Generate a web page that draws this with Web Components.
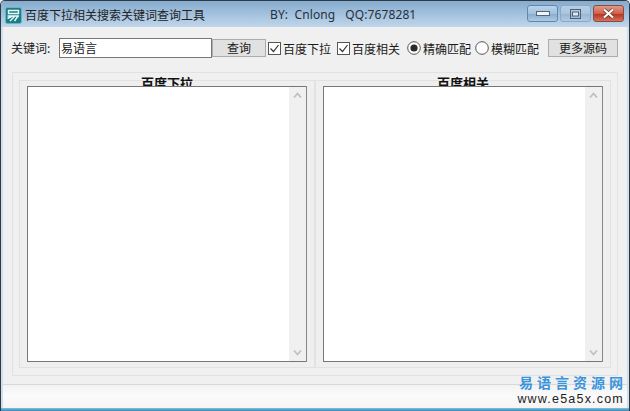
<!DOCTYPE html>
<html lang="zh"><head><meta charset="utf-8"><title>百度下拉相关搜索关键词查询工具</title>
<style>html,body{margin:0;padding:0;background:#f0f0f0}body{font:12px "Noto Sans CJK SC","Liberation Sans",sans-serif;color:#1a1a1a}</style>
</head><body>
<app-window></app-window>
<template id="tb"><style>
:host{display:flex;align-items:center;height:26px;box-sizing:border-box;padding-left:4px;background:linear-gradient(#86abcd 0,#a0bfdc 45%,#c0d6ea 100%);color:#222}
svg.logo{width:17px;height:17px;margin-top:3px;flex:none}
.t{margin-left:3px;width:245px;white-space:nowrap;margin-top:2px;font-size:12px;line-height:20px}
.by{white-space:nowrap;margin-top:2px;line-height:20px;font-family:"Noto Sans","Noto Sans CJK SC",sans-serif;font-size:12px;color:#26303a;letter-spacing:.1px}
.by span{margin-left:10px}
.ctl{margin-left:auto;display:flex;align-self:flex-start;margin-right:5px;margin-top:4px;gap:2px}
.b{width:31px;height:17px;box-sizing:border-box;border:1px solid #5f88ad;border-radius:3px;display:flex;align-items:center;justify-content:center}
.min{background:linear-gradient(#bad3e9,#a2c1dd 50%,#8aacce 55%,#aecbe5)}
.max{background:linear-gradient(#b8cfe4,#aac5de 50%,#9ab7d3 55%,#afc9e1);border-color:#8ba8c4}
.cls{background:linear-gradient(#e09a88,#d0604b 50%,#b93520 55%,#d3745f);border-color:#8a4a40}
</style>
<svg class="logo" viewBox="0 0 17 17"><rect x=".5" y=".5" width="16" height="16" rx="2" fill="#1b7d87" stroke="#62bac0"/><path d="M3.5 3.5h10v3h-10zM2.5 9h11.5M2.5 11.5L7.5 9M5 14l5-5M9.5 14l3.5-5" fill="none" stroke="#eafafa" stroke-width="1.4"/></svg>
<div class="t"><slot></slot></div>
<div class="by">BY:&nbsp; Cnlong<span>QQ:7678281</span></div>
<div class="ctl">
<div class="b min"><svg width="14" height="5"><rect x=".5" y=".5" width="13" height="4" fill="#eef4fa" stroke="#50667c"/></svg></div>
<div class="b max"><svg width="11" height="10"><rect x=".5" y=".5" width="10" height="9" fill="none" stroke="#4c6074"/><rect x="2.5" y="3" width="6" height="4" fill="#dfe9f2" stroke="#4c6074"/></svg></div>
<div class="b cls"><svg width="13" height="11"><path d="M2 1.5l9 8M11 1.5l-9 8" stroke="#5d342c" stroke-width="3.6"/><path d="M2 1.5l9 8M11 1.5l-9 8" stroke="#fff" stroke-width="2.2"/></svg></div>
</div></template>

<template id="btn"><style>
:host{display:flex;align-items:center;justify-content:center;box-sizing:border-box;height:18px;background:#e1e1e1;border:1px solid #adadad;line-height:16px;font-size:12px}
</style><slot></slot></template>

<template id="chk"><style>
:host{display:flex;align-items:center;white-space:nowrap;font-size:12px;height:18px}
.box{width:13px;height:13px;flex:none;margin-right:2px}
</style>
<svg class="box" viewBox="0 0 13 13"><rect x=".5" y=".5" width="12" height="12" fill="#fff" stroke="#555"/><path d="M2.5 6.5l3 3 5-6.5" fill="none" stroke="#333" stroke-width="1.2"/></svg><slot></slot></template>

<template id="rad"><style>
:host{display:flex;align-items:center;white-space:nowrap;font-size:12px;height:18px}
.box{width:14px;height:14px;flex:none;margin-right:2px}
</style>
<svg class="box" viewBox="0 0 14 14"><circle cx="7" cy="7" r="6.3" fill="#fff" stroke="#555"/><circle class="d" cx="7" cy="7" r="3.6" fill="#2a2a2a"/></svg><slot></slot></template>

<template id="list"><style>
:host{display:block;position:relative;box-sizing:border-box;width:100%;height:100%;background:#fff;border:1px solid #777;border-right-color:#888}
.sb{position:absolute;top:0;right:0;bottom:0;width:17px;background:#f0f0f0;display:flex;flex-direction:column;justify-content:space-between;align-items:center;padding:5px 0;box-sizing:border-box}
</style>
<div class="sb"><svg width="9" height="7"><path d="M1 5.5l3.5-4 3.5 4" fill="none" stroke="#bfbfbf" stroke-width="1.8"/></svg><svg width="9" height="7"><path d="M1 1.5l3.5 4 3.5-4" fill="none" stroke="#bfbfbf" stroke-width="1.8"/></svg></div></template>

<template id="grp"><style>
:host{display:grid;grid-template-rows:5px 1fr;box-sizing:border-box;border:1px solid #e2e2e2;padding:0 7px 5px;position:relative;background:#efefef}
.h{height:5px;position:relative}
.cap{position:absolute;left:0;right:0;top:-5px;height:10px;overflow:hidden;text-align:center;font-weight:700;font-size:13px;line-height:14px;color:#111}
</style>
<div class="h"><div class="cap"><slot name="cap"></slot></div></div>
<slot></slot></template>

<template id="app"><style>
:host{display:flex;flex-direction:column;width:630px;height:411px;box-sizing:border-box;position:relative;overflow:hidden;background:#cfdfec;border:1px solid #2b3a45;border-bottom:0;border-radius:5px 5px 0 0}
.main{flex:1;display:flex;flex-direction:column;min-height:0;margin:0 2px;background:#f0f0f0}
.tools{height:42px;margin-bottom:3px;box-sizing:border-box;padding-left:8px;display:flex;align-items:center;white-space:nowrap}
.tools>*{flex:none}
.lbl{width:48px;font-size:12px;line-height:18px;color:#222}
.inp{width:153px;height:20px;box-sizing:border-box;background:#fff;border:1px solid #777;padding-left:1px;font-size:12px;line-height:18px}
.outer{margin:0 9px;flex:none;height:304px;border:1px solid #e2e2e2;box-sizing:border-box;padding:7px 6px;display:flex}
.outer>*{flex:1;min-width:0}
.status{margin-top:8px;flex:1;border-top:1px solid #d9d9d9;background:linear-gradient(#f3f3f3,#fbfbfb 50%,#f7f3f3)}
.edge{height:3px;flex:none;background:linear-gradient(#7cc2e4,#3c86b0)}
.wm{position:absolute;right:6px;bottom:5px;width:106px;display:flex;flex-direction:column;align-items:flex-end}
.wm b{display:block;color:#3a94dc;font-size:14px;letter-spacing:4px;margin-right:-4px;font-family:"Noto Sans CJK SC",sans-serif;font-weight:700;line-height:20px;white-space:nowrap}
.wm i{display:block;font:12.5px/14px "Liberation Sans",sans-serif;letter-spacing:1.2px;margin-right:-1px;color:#222;white-space:nowrap}
</style>
<title-bar>百度下拉相关搜索关键词查询工具</title-bar>
<div class="main">
<div class="tools">
<div class="lbl">关键词:</div>
<div class="inp">易语言</div>
<push-btn style="width:54px;margin-right:2px">查询</push-btn>
<check-box style="width:69px">百度下拉</check-box>
<check-box style="width:70px">百度相关</check-box>
<radio-box style="width:68px">精确匹配</radio-box>
<radio-box id="r2" style="width:73px">模糊匹配</radio-box>
<push-btn style="width:70px">更多源码</push-btn>
</div>
<div class="outer">
<group-box><span slot="cap">百度下拉</span><list-box></list-box></group-box>
<group-box><span slot="cap">百度相关</span><list-box></list-box></group-box>
</div>
<div class="status"></div>
</div>
<div class="edge"></div>
<div class="wm"><b>易语言资源网</b><i>www.e5a5x.com</i></div>
</template>
<script>
function def(name,id){customElements.define(name,class extends HTMLElement{constructor(){super();this.attachShadow({mode:'open'}).appendChild(document.getElementById(id).content.cloneNode(true));}});}
def('title-bar','tb');def('push-btn','btn');def('check-box','chk');def('radio-box','rad');def('list-box','list');def('group-box','grp');def('app-window','app');
const a=document.querySelector('app-window').shadowRoot.getElementById('r2');a.shadowRoot.querySelector('.d').remove();
</script>
</body></html>
